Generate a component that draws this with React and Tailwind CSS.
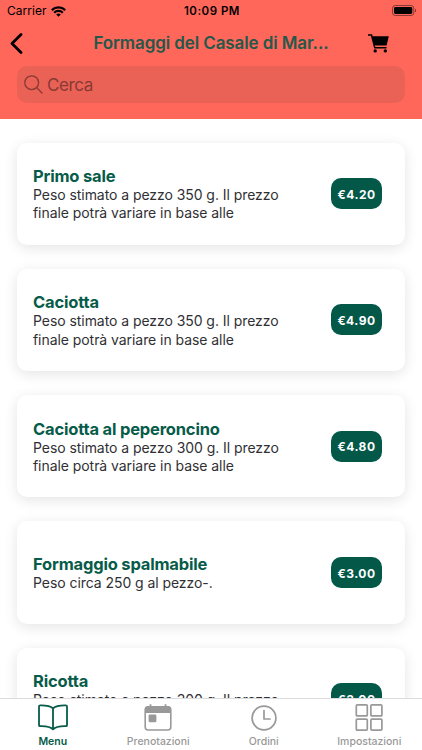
import React from 'react';

const products = [
    { name: 'Primo sale', description: ['Peso stimato a pezzo 350 g. Il prezzo', 'finale potrà variare in base alle'], price: '€4.20' },
    { name: 'Caciotta', description: ['Peso stimato a pezzo 350 g. Il prezzo', 'finale potrà variare in base alle'], price: '€4.90' },
    { name: 'Caciotta al peperoncino', description: ['Peso stimato a pezzo 300 g. Il prezzo', 'finale potrà variare in base alle'], price: '€4.80' },
    { name: 'Formaggio spalmabile', description: ['Peso circa 250 g al pezzo-.'], price: '€3.00' },
    { name: 'Ricotta', description: ['Peso stimato a pezzo 300 g. Il prezzo', 'finale potrà variare in base alle'], price: '€3.00' },
];

const WifiIcon = () => (
    <svg className="ml-[4px] h-[11px] w-[15px]" viewBox="0 0 15 11" fill="none" stroke="black" strokeWidth="2.2">
        <path d="M0.8 4.1a9.6 9.6 0 0 1 13.4 0" />
        <path d="M3.2 6.7a6.1 6.1 0 0 1 8.6 0" />
        <path d="M7.5 10.8L5.2 8.5a3.3 3.3 0 0 1 4.6 0z" fill="black" stroke="none" />
    </svg>
);

const BatteryIcon = () => (
    <svg className="mb-px h-[11px] w-[25px]" viewBox="0 0 25 11">
        <rect x="0.5" y="0.5" width="21.3" height="10" rx="2.8" fill="none" stroke="black" strokeOpacity="0.45" />
        <rect x="2" y="2" width="18.3" height="7" rx="1.4" />
        <path d="M23 3.7c1.6 0.5 1.6 3.1 0 3.6z" fillOpacity="0.5" />
    </svg>
);

const CartIcon = () => (
    <svg className="mb-[2px] h-[19px] w-[21px]" viewBox="0 0 21 19">
        <path d="M0 0.2h4l0.7 2.1h16.1l-2.2 9.3H6.8l0.5 1.5h11.2v1.4H6.2L2.9 1.7H0z" />
        <circle cx="7.2" cy="16.9" r="1.7" />
        <circle cx="17.3" cy="16.9" r="1.7" />
    </svg>
);

const MenuIcon = () => (
    <svg className="h-[27px] w-[30px]" viewBox="0 0 30 27" fill="none" stroke="currentColor" strokeWidth="1.8" strokeLinejoin="round">
        <path d="M15 4.4C12.8 2.4 8.5 1.2 2 1.4q-1 0-1 1V21.2q0 1 1 1C8.5 22 12.8 23 15 25.4C17.2 23 21.5 22 28 22.2q1 0 1-1V2.4q0-1-1-1C21.5 1.2 17.2 2.4 15 4.4zV25" />
    </svg>
);

const CalendarIcon = () => (
    <svg className="h-[27px] w-[28px]" viewBox="0 0 28 27" fill="none" stroke="currentColor">
        <rect x="1.2" y="2.8" width="25.6" height="23.2" rx="3" strokeWidth="1.6" />
        <path d="M1 9V5.5Q1 2 4.5 2H23.5Q27 2 27 5.5V9z" fill="currentColor" stroke="none" />
        <path d="M6.5 0.2V3M21.5 0.2V3" strokeWidth="1.8" />
        <rect x="4.6" y="10.4" width="7.8" height="7.8" rx="1.3" fill="currentColor" stroke="none" />
    </svg>
);

const ClockIcon = () => (
    <svg className="h-[26px] w-[26px]" viewBox="0 0 26 26" fill="none" stroke="currentColor" strokeWidth="1.7" strokeLinecap="round" strokeLinejoin="round">
        <circle cx="13" cy="13" r="11.9" />
        <path d="M13 5.5V14H19" />
    </svg>
);

const GridIcon = () => (
    <svg className="h-[27px] w-[28px]" viewBox="0 0 28 27" fill="none" stroke="currentColor" strokeWidth="1.7">
        <rect x="1.3" y="0.9" width="11" height="11" rx="1" />
        <rect x="15.9" y="0.9" width="11" height="11" rx="1" />
        <rect x="1.3" y="15.1" width="11" height="11" rx="1" />
        <rect x="15.9" y="15.1" width="11" height="11" rx="1" />
    </svg>
);

const tabs = [
    { label: 'Menu', Icon: MenuIcon, active: true },
    { label: 'Prenotazioni', Icon: CalendarIcon },
    { label: 'Ordini', Icon: ClockIcon },
    { label: 'Impostazioni', Icon: GridIcon },
];

const Header = () => (
    <header className="h-[118.5px] shrink-0 bg-[#ff675b]">
        <div className="grid h-[22px] grid-cols-[1fr_auto_1fr] items-center pr-[5px] pl-[7px]">
            <div className="flex items-center">
                <span className="text-[12px] tracking-[0.05px]">Carrier</span>
                <WifiIcon />
            </div>
            <span className="pt-px text-[11.5px] font-semibold tracking-[0.5px]">10:09 PM</span>
            <div className="flex justify-end">
                <BatteryIcon />
            </div>
        </div>
        <div className="flex h-[44px] items-center justify-between pr-[33px] pl-[10px]">
            <svg className="h-[22px] w-[14px]" viewBox="0 0 14 22" fill="none" stroke="black" strokeWidth="2.8" strokeLinecap="round" strokeLinejoin="round">
                <path d="M11 1.5L2 10.5L11 19.5" />
            </svg>
            <h1 className="ml-[30px] text-[17px] font-semibold tracking-[-0.1px] whitespace-nowrap text-[#26584a]">Formaggi del Casale di Mar...</h1>
            <CartIcon />
        </div>
        <div className="mx-[17px] flex h-[37px] items-center rounded-[10px] bg-[#ea6156] pl-[7px] text-[#883a34]">
            <svg className="h-[19px] w-[19px]" viewBox="0 0 19 19" fill="none" stroke="currentColor" strokeWidth="1.3" strokeLinecap="round">
                <circle cx="7.7" cy="7.7" r="6.9" />
                <path d="M12.8 12.8L18 18" />
            </svg>
            <span className="ml-[4px] pt-[2px] text-[17px] tracking-[-0.4px]">Cerca</span>
        </div>
    </header>
);

const ProductCard = ({ product }) => (
    <div className="flex h-[102.3px] shrink-0 items-center justify-between rounded-[10px] bg-white pr-[23px] pl-4 shadow-[0_3px_14px_rgba(0,0,0,0.11)]">
        <div className="pt-[1.2px]">
            <h2 className="text-[16.5px] leading-5 font-bold tracking-[-0.18px] text-[#075b49]">{product.name}</h2>
            <p className="text-[14px] leading-[18.3px] tracking-[-0.06px] whitespace-nowrap text-[#303034]">
                {product.description.map((line) => (
                    <span key={line} className="block">{line}</span>
                ))}
            </p>
        </div>
        <div className="flex h-[31px] w-[51px] items-center justify-center rounded-[10px] bg-[#035848] pt-[2px] text-[12px] font-bold tracking-[0.5px] text-white">
            {product.price}
        </div>
    </div>
);

const TabBar = () => (
    <nav className="grid h-[52px] shrink-0 grid-cols-4 border-t border-[#dcdcdc] bg-white">
        {tabs.map(({ label, Icon, active }) => (
            <div key={label} className={`flex flex-col items-center pt-[5px] ${active ? 'text-[#075b49]' : 'text-[#999999]'}`}>
                <div className="flex h-[27px] items-center">
                    <Icon />
                </div>
                <span className={`mt-[4px] text-[10.5px] leading-[14px] ${active ? 'font-semibold' : 'font-medium'}`}>{label}</span>
            </div>
        ))}
    </nav>
);

const App = () => {
    return (
        <div className="flex h-[750px] w-[422px] flex-col overflow-hidden bg-white font-[Inter,sans-serif] text-black">
            <Header />
            <main className="flex min-h-0 flex-1 flex-col gap-6 overflow-hidden px-[17px] pt-6">
                {products.map((product) => (
                    <ProductCard key={product.name} product={product} />
                ))}
            </main>
            <TabBar />
        </div>
    );
};

export default App;
